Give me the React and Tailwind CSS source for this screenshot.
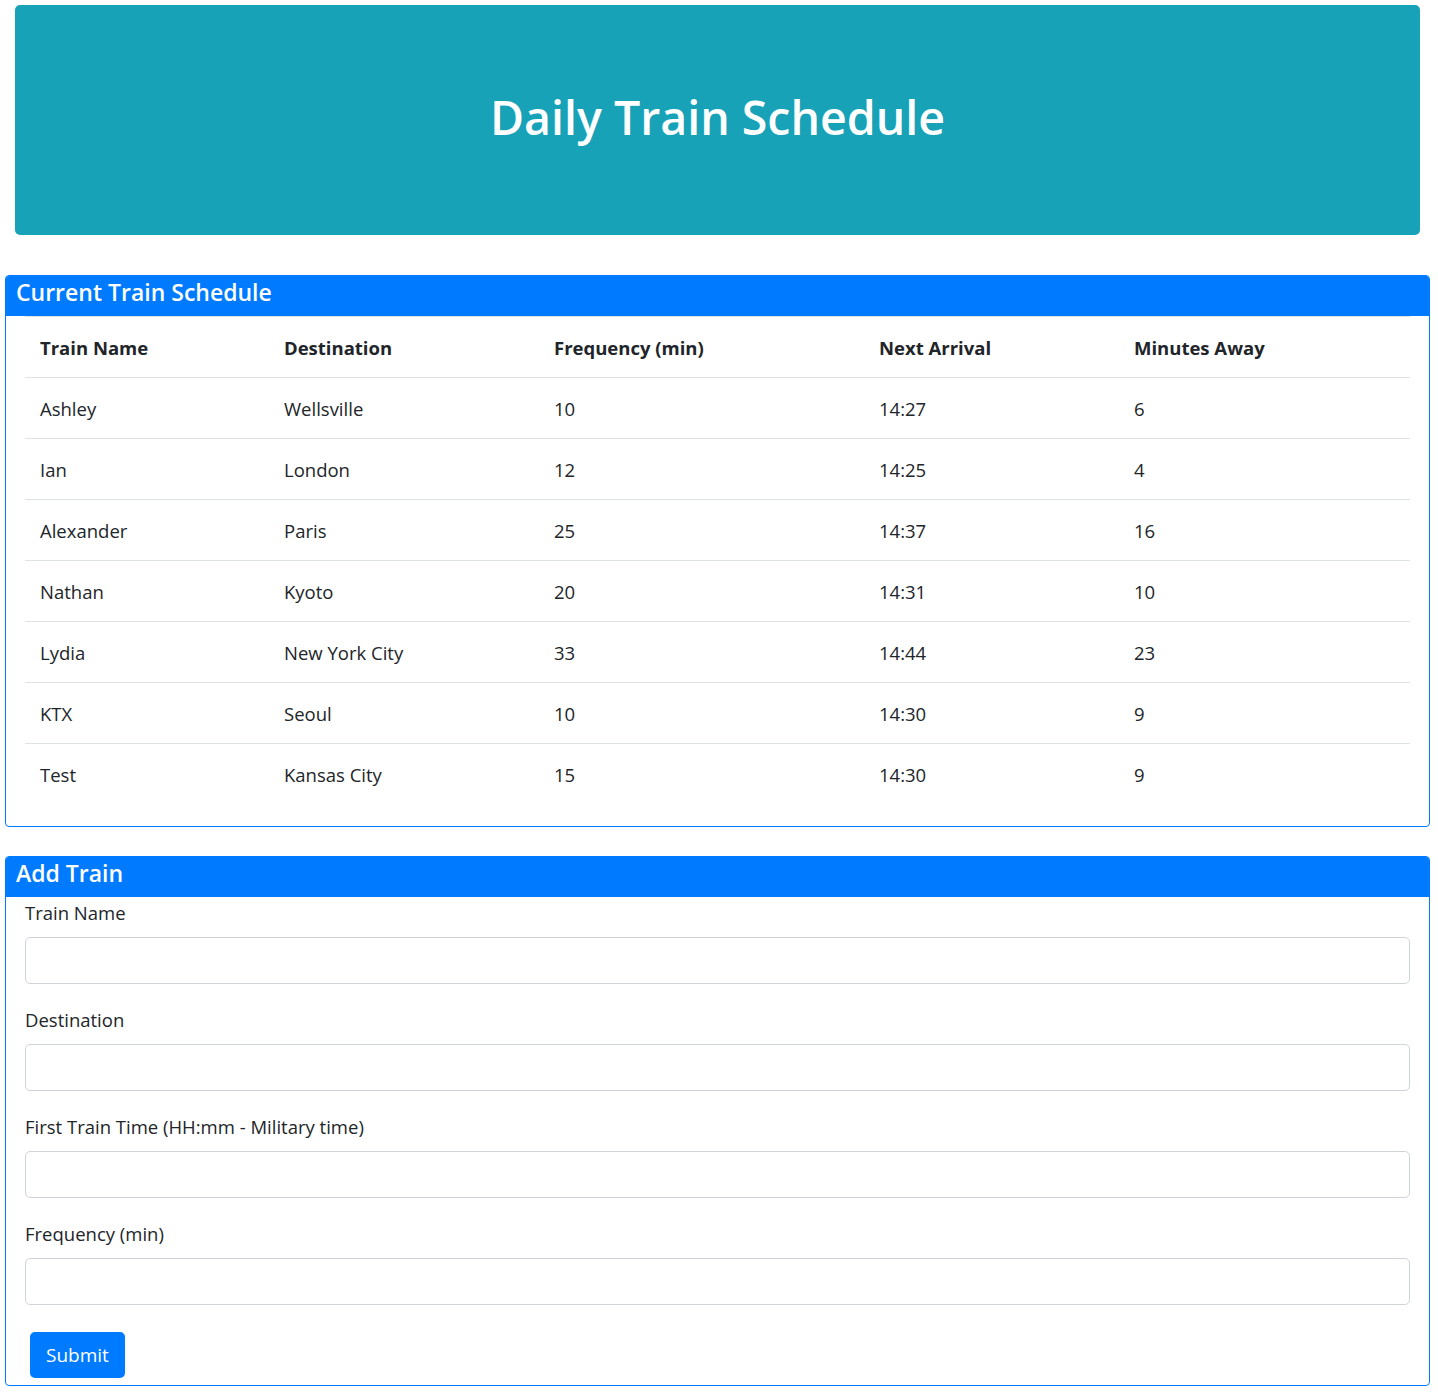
const trains = [
  { name: 'Ashley', dest: 'Wellsville', freq: 10, next: '14:27', away: 6 },
  { name: 'Ian', dest: 'London', freq: 12, next: '14:25', away: 4 },
  { name: 'Alexander', dest: 'Paris', freq: 25, next: '14:37', away: 16 },
  { name: 'Nathan', dest: 'Kyoto', freq: 20, next: '14:31', away: 10 },
  { name: 'Lydia', dest: 'New York City', freq: 33, next: '14:44', away: 23 },
  { name: 'KTX', dest: 'Seoul', freq: 10, next: '14:30', away: 9 },
  { name: 'Test', dest: 'Kansas City', freq: 15, next: '14:30', away: 9 },
];

const fields = [
  'Train Name',
  'Destination',
  'First Train Time (HH:mm - Military time)',
  'Frequency (min)',
];

function CardHeader({ title }) {
  return (
    <div className="h-[40px] bg-[#007bff] px-[10px] pb-[7px] flex items-center text-white text-[23px] font-semibold leading-none">
      {title}
    </div>
  );
}

export default function App() {
  return (
    <div className="min-h-screen bg-white text-[#212529] font-['Open_Sans',sans-serif] text-[18.5px] pt-[5px] pb-[12px]">
      <div className="ml-[15px] w-[1405px] h-[230px] rounded-[5px] bg-[#17a2b8] flex items-center justify-center">
        <h1 className="text-white text-[46.5px] font-semibold leading-none -mt-[6px]">
          Daily Train Schedule
        </h1>
      </div>

      <div className="ml-[5px] w-[1425px] mt-[40px] border border-[#007bff] rounded-[4px] overflow-hidden">
        <CardHeader title="Current Train Schedule" />
        <div className="px-[19px] pb-[22px]">
          <table className="w-full table-fixed border-collapse">
            <colgroup>
              <col className="w-[244px]" />
              <col className="w-[270px]" />
              <col className="w-[325px]" />
              <col className="w-[255px]" />
              <col />
            </colgroup>
            <thead>
              <tr className="border-t border-b border-[#dee2e6]">
                {['Train Name', 'Destination', 'Frequency (min)', 'Next Arrival', 'Minutes Away'].map((h) => (
                  <th key={h} className="text-left font-bold px-[15px] pt-[18px] pb-[16px] leading-[26px]">
                    {h}
                  </th>
                ))}
              </tr>
            </thead>
            <tbody>
              {trains.map((t, i) => (
                <tr key={i} className={i < trains.length - 1 ? 'border-b border-[#dee2e6]' : ''}>
                  <td className="px-[15px] pt-[18px] pb-[16px] leading-[26px]">{t.name}</td>
                  <td className="px-[15px] pt-[18px] pb-[16px] leading-[26px]">{t.dest}</td>
                  <td className="px-[15px] pt-[18px] pb-[16px] leading-[26px]">{t.freq}</td>
                  <td className="px-[15px] pt-[18px] pb-[16px] leading-[26px]">{t.next}</td>
                  <td className="px-[15px] pt-[18px] pb-[16px] leading-[26px]">{t.away}</td>
                </tr>
              ))}
            </tbody>
          </table>
        </div>
      </div>

      <div className="ml-[5px] w-[1425px] mt-[29px] border border-[#007bff] rounded-[4px] overflow-hidden">
        <CardHeader title="Add Train" />
        <form className="px-[19px] pt-[4px] pb-[7px]" onSubmit={(e) => e.preventDefault()}>
          {fields.map((f) => (
            <div key={f} className="mb-[24px]">
              <label className="block leading-[24px] mb-[12px]">{f}</label>
              <input
                type="text"
                className="block w-full h-[47px] border border-[#ced4da] rounded-[5px] px-3 outline-none"
              />
            </div>
          ))}
          <button
            type="submit"
            className="ml-[5px] mt-[3px] h-[46px] px-[16px] bg-[#007bff] text-white text-[19px] rounded-[5px]"
          >
            Submit
          </button>
        </form>
      </div>
    </div>
  );
}
